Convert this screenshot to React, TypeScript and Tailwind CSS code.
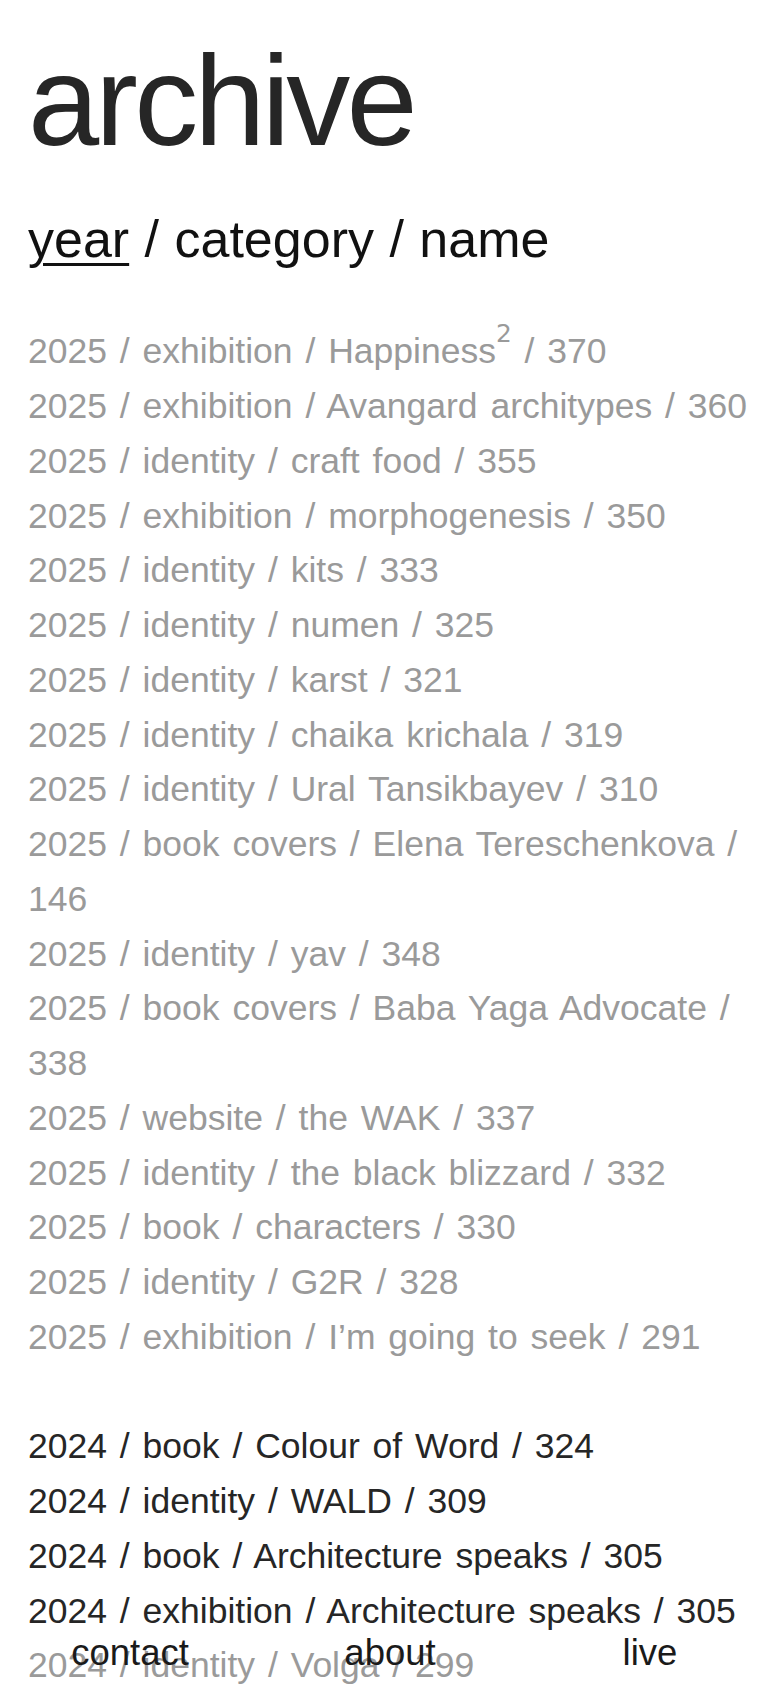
import React from 'react';

type Item = {
  year: number;
  category: string;
  name: React.ReactNode;
  id: number;
  muted?: boolean;
};

const items2025: Item[] = [
  {
    year: 2025,
    category: 'exhibition',
    name: (
      <>
        Happiness
        <sup className="top-[-0.85em] text-[0.7em]" style={{ fontFamily: '"DejaVu Sans", sans-serif' }}>
          2
        </sup>
      </>
    ),
    id: 370,
  },
  { year: 2025, category: 'exhibition', name: 'Avangard architypes', id: 360 },
  { year: 2025, category: 'identity', name: 'craft food', id: 355 },
  { year: 2025, category: 'exhibition', name: 'morphogenesis', id: 350 },
  { year: 2025, category: 'identity', name: 'kits', id: 333 },
  { year: 2025, category: 'identity', name: 'numen', id: 325 },
  { year: 2025, category: 'identity', name: 'karst', id: 321 },
  { year: 2025, category: 'identity', name: 'chaika krichala', id: 319 },
  { year: 2025, category: 'identity', name: 'Ural Tansikbayev', id: 310 },
  { year: 2025, category: 'book covers', name: 'Elena Tereschenkova', id: 146 },
  { year: 2025, category: 'identity', name: 'yav', id: 348 },
  { year: 2025, category: 'book covers', name: 'Baba Yaga Advocate', id: 338 },
  { year: 2025, category: 'website', name: 'the WAK', id: 337 },
  { year: 2025, category: 'identity', name: 'the black blizzard', id: 332 },
  { year: 2025, category: 'book', name: 'characters', id: 330 },
  { year: 2025, category: 'identity', name: 'G2R', id: 328 },
  { year: 2025, category: 'exhibition', name: 'I’m going to seek', id: 291 },
];

const items2024: Item[] = [
  { year: 2024, category: 'book', name: 'Сolour of Word', id: 324 },
  { year: 2024, category: 'identity', name: 'WALD', id: 309 },
  { year: 2024, category: 'book', name: 'Architecture speaks', id: 305 },
  { year: 2024, category: 'exhibition', name: 'Architecture speaks', id: 305 },
  { year: 2024, category: 'identity', name: 'Volga', id: 299, muted: true },
  { year: 2024, category: 'identity', name: 'Rodnik', id: 296, muted: true },
];

function Row({ item, dark }: { item: Item; dark: boolean }) {
  const color = dark && !item.muted ? 'text-[#262626]' : 'text-[#9a9a9a]';
  return (
    <li className={color}>
      <a href="#">
        {item.year} / {item.category} / {item.name} / {item.id}
      </a>
    </li>
  );
}

export default function App() {
  return (
    <div
      className="relative h-[1688px] overflow-hidden bg-white"
      style={{ fontFamily: '"Liberation Sans", Arial, sans-serif' }}
    >
      <div className="pl-[28px] pr-[12px] pt-[37px]">
        <h1 className="text-[128px] leading-none tracking-[-0.03em] text-[#262626]">archive</h1>

        <nav className="mt-[43px] text-[52px] leading-[1.2] text-[#111] [word-spacing:1px]">
          <a href="#" className="underline decoration-[3px] underline-offset-[6px]">year</a>
          <span> / </span>
          <a href="#">category</a>
          <span> / </span>
          <a href="#">name</a>
        </nav>

        <div className="mt-[54px] text-[35.5px] leading-[54.75px] [word-spacing:3px]">
          <ul>
            {items2025.map((item, i) => (
              <Row key={i} item={item} dark={false} />
            ))}
          </ul>
          <ul className="mt-[54.75px]">
            {items2024.map((item, i) => (
              <Row key={i} item={item} dark={true} />
            ))}
          </ul>
        </div>
      </div>

      <footer className="absolute inset-x-0 bottom-0 grid grid-cols-3 pb-[7px] text-center text-[36.5px] leading-[1.5] text-[#1a1a1a]">
        <a href="#">contact</a>
        <a href="#">about</a>
        <a href="#">live</a>
      </footer>
    </div>
  );
}
